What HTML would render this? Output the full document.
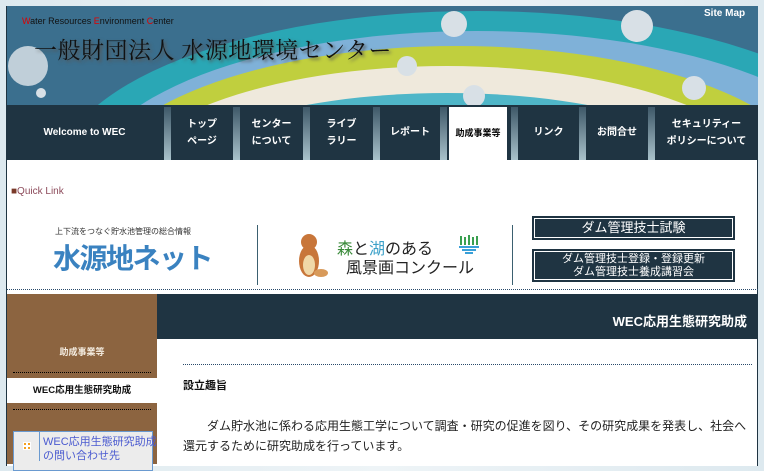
<!DOCTYPE html>
<html><head><meta charset="utf-8"><style>
*{margin:0;padding:0;box-sizing:border-box}
body{width:764px;height:452px;overflow:hidden;background:linear-gradient(90deg,#dde9ef,#eef4f7 50%,#dde9ef);font-family:"Liberation Sans","Noto Sans CJK JP",sans-serif;position:relative}
#page{position:absolute;left:6px;top:6px;width:752px;height:460px;background:#fff;border-left:1px solid #1f3442;border-right:1px solid #1f3442}
#hdr{position:absolute;left:0;top:0;width:751px;height:99px;background:#3a6d8c;overflow:hidden}
#nav{position:absolute;left:0;top:99px;width:751px;height:55px;background:#1f3442}
.ni{position:absolute;top:0;height:55px;color:#fff;font-size:10px;font-weight:bold;display:flex;align-items:center;justify-content:center;text-align:center;line-height:17px}
.sep{position:absolute;top:2px;width:7px;height:53px;background:linear-gradient(#3e5868,#a9c2cb)}
.t{position:absolute}
.btn{position:absolute;background:#1f3442;border:2px solid #1f3442;outline:1px solid #fff;outline-offset:-3px;color:#fff;text-align:center;font-size:12px}
</style></head><body>
<div id="page">
<div id="hdr">
<svg width="751" height="99" style="position:absolute;left:0;top:0">
<rect width="751" height="99" fill="#3b6f8e"/>
<ellipse cx="470" cy="170" rx="420" ry="165" fill="#2aa7b5"/>
<ellipse cx="470" cy="175" rx="390" ry="150" fill="#7fb1d8"/>
<ellipse cx="450" cy="180" rx="360" ry="140" fill="#c0cf3e"/>
<ellipse cx="440" cy="185" rx="330" ry="125" fill="#efe9dc"/>
<ellipse cx="440" cy="190" rx="300" ry="103" fill="#4fb6c8"/>
<ellipse cx="440" cy="195" rx="290" ry="95" fill="#3b6f8e"/>
<circle cx="447" cy="18" r="13" fill="#d8e0e6"/>
<circle cx="21" cy="60" r="20" fill="#d8e0e6" opacity=".85"/>
<circle cx="400" cy="60" r="10" fill="#d8e0e6"/>
<circle cx="467" cy="90" r="11" fill="#d8e0e6"/>
<circle cx="687" cy="82" r="12" fill="#d8e0e6"/>
<circle cx="34" cy="87" r="5" fill="#d8e0e6"/>
<circle cx="630" cy="20" r="16" fill="#d8e0e6"/>
</svg>
<div class="t" style="left:15px;top:10px;font-size:9px;color:#111"><span style="color:#d00">W</span>ater Resources <span style="color:#d00">E</span>nvironment <span style="color:#d00">C</span>enter</div>
<div class="t" style="left:27px;top:26px;font-size:23px;color:#111;font-family:'Liberation Serif','Noto Serif CJK SC',serif;text-shadow:2px 2px 3px #555;letter-spacing:0.5px">一般財団法人 水源地環境センター</div>
<div class="t" style="left:697px;top:2px;font-size:10px;font-weight:bold;color:#fff">Site Map</div>
</div>
<div id="nav">
<div class="ni" style="left:0;width:155px">Welcome to WEC</div>
<div class="sep" style="left:157px"></div><div class="ni" style="left:164px;width:62px">トップ<br>ページ</div>
<div class="sep" style="left:226px"></div><div class="ni" style="left:233px;width:63px">センター<br>について</div>
<div class="sep" style="left:296px"></div><div class="ni" style="left:303px;width:63px">ライブ<br>ラリー</div>
<div class="sep" style="left:366px"></div><div class="ni" style="left:373px;width:60px">レポート</div>
<div class="sep" style="left:433px"></div><div class="ni" style="left:442px;width:58px;top:2px;height:53px;background:#fff;color:#000;font-size:9px">助成事業等</div>
<div class="sep" style="left:504px"></div><div class="ni" style="left:511px;width:61px">リンク</div>
<div class="sep" style="left:572px"></div><div class="ni" style="left:579px;width:62px">お問合せ</div>
<div class="sep" style="left:641px"></div><div class="ni" style="left:648px;width:103px">セキュリティー<br>ポリシーについて</div>
</div>
<div class="t" style="left:4px;top:180px;font-size:10px;color:#7a3a2a">■<span style="color:#8c4a5a">Quick Link</span></div>
<div class="t" style="left:48px;top:220px;font-size:8px;color:#333">上下流をつなぐ貯水池管理の総合情報</div>
<div class="t" style="left:46px;top:231px;font-size:28px;font-weight:bold;color:#3a82c0;letter-spacing:-1.5px">水源地ネット</div>
<div class="t" style="left:250px;top:219px;width:1px;height:60px;background:#3b6070"></div>
<svg class="t" style="left:284px;top:225px" width="40" height="50"><ellipse cx="18" cy="30" rx="10" ry="16" fill="#c8763a"/><ellipse cx="18" cy="34" rx="6" ry="10" fill="#f0d8a8"/><circle cx="18" cy="11" r="8" fill="#c8763a"/><ellipse cx="30" cy="42" rx="7" ry="4" fill="#d89a5a"/></svg>
<div class="t" style="left:330px;top:229px;font-size:16px;color:#222"><span style="color:#3a8a3a">森</span>と<span style="color:#3aa0c8">湖</span>のある</div>
<div class="t" style="left:339px;top:248px;font-size:16px;color:#222">風景画コンクール</div>
<svg class="t" style="left:450px;top:229px" width="24" height="20"><g fill="#3aa050"><rect x="3" y="1" width="2" height="9"/><rect x="7" y="2" width="2" height="8"/><rect x="11" y="0" width="2" height="10"/><rect x="15" y="2" width="2" height="8"/><rect x="19" y="1" width="2" height="9"/></g><g fill="#3aa0d8"><rect x="2" y="11" width="20" height="2"/><rect x="5" y="14" width="14" height="2"/><rect x="8" y="17" width="8" height="2"/></g></svg>
<div class="t" style="left:505px;top:219px;width:1px;height:60px;background:#3b6070"></div>
<div class="btn" style="left:525px;top:210px;width:203px;height:24px;line-height:20px;font-size:13px">ダム管理技士試験</div>
<div class="btn" style="left:525px;top:243px;width:203px;height:33px;line-height:13px;font-size:11px;padding-top:2px">ダム管理技士登録・登録更新<br>ダム管理技士養成講習会</div>
<div class="t" style="left:0;top:283px;width:751px;border-top:1px dotted #2a4a6a"></div>
<div class="t" style="left:0;top:288px;width:150px;height:170px;background:#8c6440"></div>
<div class="t" style="left:0;top:339px;width:150px;text-align:center;font-size:9px;font-weight:bold;color:#f4ece0">助成事業等</div>
<div class="t" style="left:6px;top:366px;width:138px;border-top:1px dotted #000"></div>
<div class="t" style="left:0;top:372px;width:150px;height:25px;background:#fff;text-align:center;line-height:25px;font-size:9.5px;font-weight:bold;color:#111">WEC応用生態研究助成</div>
<div class="t" style="left:6px;top:403px;width:138px;border-top:1px dotted #000"></div>
<div class="t" style="left:6px;top:425px;width:140px;height:40px;background:#ececec;border:1px solid #6a9ad0"></div>
<div class="t" style="left:32px;top:425px;width:1px;height:30px;background:#6a9ad0"></div>
<div class="t" style="left:16px;top:436px;width:8px;height:8px;background:radial-gradient(circle,#f5a020 40%,#fff 45%);background-size:4px 4px"></div>
<div class="t" style="left:36px;top:429px;font-size:11px;color:#4a5ad0;line-height:14px">WEC応用生態研究助成<br>の問い合わせ先</div>
<div class="t" style="left:150px;top:288px;width:601px;height:45px;background:#1f3442"></div>
<div class="t" style="right:10px;top:305px;font-size:13px;font-weight:bold;color:#fff">WEC応用生態研究助成</div>
<div class="t" style="left:176px;top:358px;width:569px;border-top:1px dotted #2a4a6a"></div>
<div class="t" style="left:176px;top:371px;font-size:11px;font-weight:bold;color:#111">設立趣旨</div>
<div class="t" style="left:176px;top:410px;width:575px;font-size:12px;color:#222;line-height:20px;text-indent:24px">ダム貯水池に係わる応用生態工学について調査・研究の促進を図り、その研究成果を発表し、社会へ還元するために研究助成を行っています。</div>
</div>
</body></html>
